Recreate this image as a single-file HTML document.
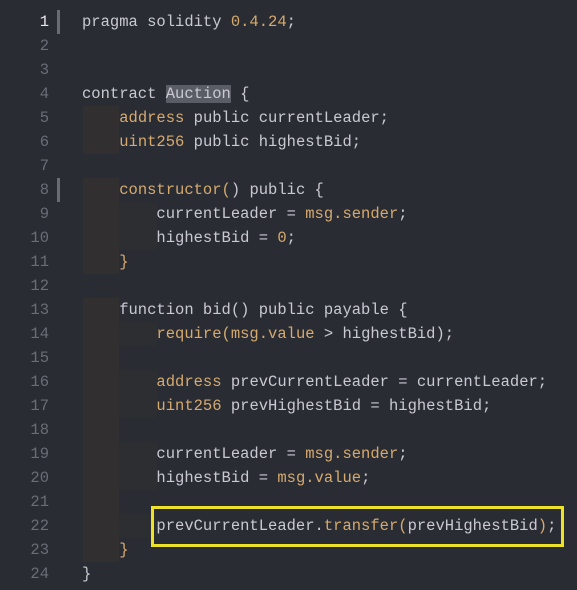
<!DOCTYPE html>
<html><head><style>
body{margin:0;background:#2a2c34;width:577px;height:590px;overflow:hidden;font-family:"Liberation Mono",monospace;font-size:15.5px;}
.l{position:absolute;left:0;height:24px;line-height:24px;white-space:pre;color:#c9c9d2;}
.n{position:absolute;width:49px;text-align:right;color:#6b6d76;}
.c{position:absolute;left:82px;}
.k{color:#d6aa6e}
.a{color:#e6e6ee}
.g1{position:absolute;left:83px;width:36px;background:rgba(90,70,30,.16);}
.g2{position:absolute;left:119px;width:38px;background:rgba(80,65,30,.10);}
.bar{position:absolute;left:57px;width:3px;height:24px;background:#6a6c74;}
.sel{background:#5b5d66;}
.box{position:absolute;left:151px;top:506px;width:407px;height:35px;border:3px solid #ede227;}
</style></head><body>
<div class="bar" style="top:10px"></div>
<div class="bar" style="top:178px"></div>
<div class="g1" style="top:106px;height:48px"></div>
<div class="g1" style="top:178px;height:96px"></div>
<div class="g1" style="top:298px;height:264px"></div>
<div class="g2" style="top:202px;height:48px"></div>
<div class="g2" style="top:322px;height:24px"></div>
<div class="g2" style="top:370px;height:48px"></div>
<div class="g2" style="top:442px;height:48px"></div>
<div class="g2" style="top:514px;height:24px"></div>
<div class="l" style="top:10px"><span class="n a">1</span><span class="c">pragma solidity <span class="k">0.4.24</span>;</span></div>
<div class="l" style="top:34px"><span class="n">2</span></div>
<div class="l" style="top:58px"><span class="n">3</span></div>
<div class="l" style="top:82px"><span class="n">4</span><span class="c">contract <span class="sel">Auction</span> {</span></div>
<div class="l" style="top:106px"><span class="n">5</span><span class="c">    <span class="k">address</span> public currentLeader;</span></div>
<div class="l" style="top:130px"><span class="n">6</span><span class="c">    <span class="k">uint256</span> public highestBid;</span></div>
<div class="l" style="top:154px"><span class="n">7</span></div>
<div class="l" style="top:178px"><span class="n">8</span><span class="c">    <span class="k">constructor(</span>) public {</span></div>
<div class="l" style="top:202px"><span class="n">9</span><span class="c">        currentLeader = <span class="k">msg.sender</span>;</span></div>
<div class="l" style="top:226px"><span class="n">10</span><span class="c">        highestBid = <span class="k">0</span>;</span></div>
<div class="l" style="top:250px"><span class="n">11</span><span class="c">    <span class="k">}</span></span></div>
<div class="l" style="top:274px"><span class="n">12</span></div>
<div class="l" style="top:298px"><span class="n">13</span><span class="c">    function bid() public payable {</span></div>
<div class="l" style="top:322px"><span class="n">14</span><span class="c">        <span class="k">require(msg.value</span> &gt; highestBid);</span></div>
<div class="l" style="top:346px"><span class="n">15</span></div>
<div class="l" style="top:370px"><span class="n">16</span><span class="c">        <span class="k">address</span> prevCurrentLeader = currentLeader;</span></div>
<div class="l" style="top:394px"><span class="n">17</span><span class="c">        <span class="k">uint256</span> prevHighestBid = highestBid;</span></div>
<div class="l" style="top:418px"><span class="n">18</span></div>
<div class="l" style="top:442px"><span class="n">19</span><span class="c">        currentLeader = <span class="k">msg.sender</span>;</span></div>
<div class="l" style="top:466px"><span class="n">20</span><span class="c">        highestBid = <span class="k">msg.value</span>;</span></div>
<div class="l" style="top:490px"><span class="n">21</span></div>
<div class="l" style="top:514px"><span class="n">22</span><span class="c">        prevCurrentLeader.<span class="k">transfer(</span>prevHighestBid<span class="k">)</span>;</span></div>
<div class="l" style="top:538px"><span class="n">23</span><span class="c">    <span class="k">}</span></span></div>
<div class="l" style="top:562px"><span class="n">24</span><span class="c">}</span></div>
<div class="box"></div>
</body></html>
